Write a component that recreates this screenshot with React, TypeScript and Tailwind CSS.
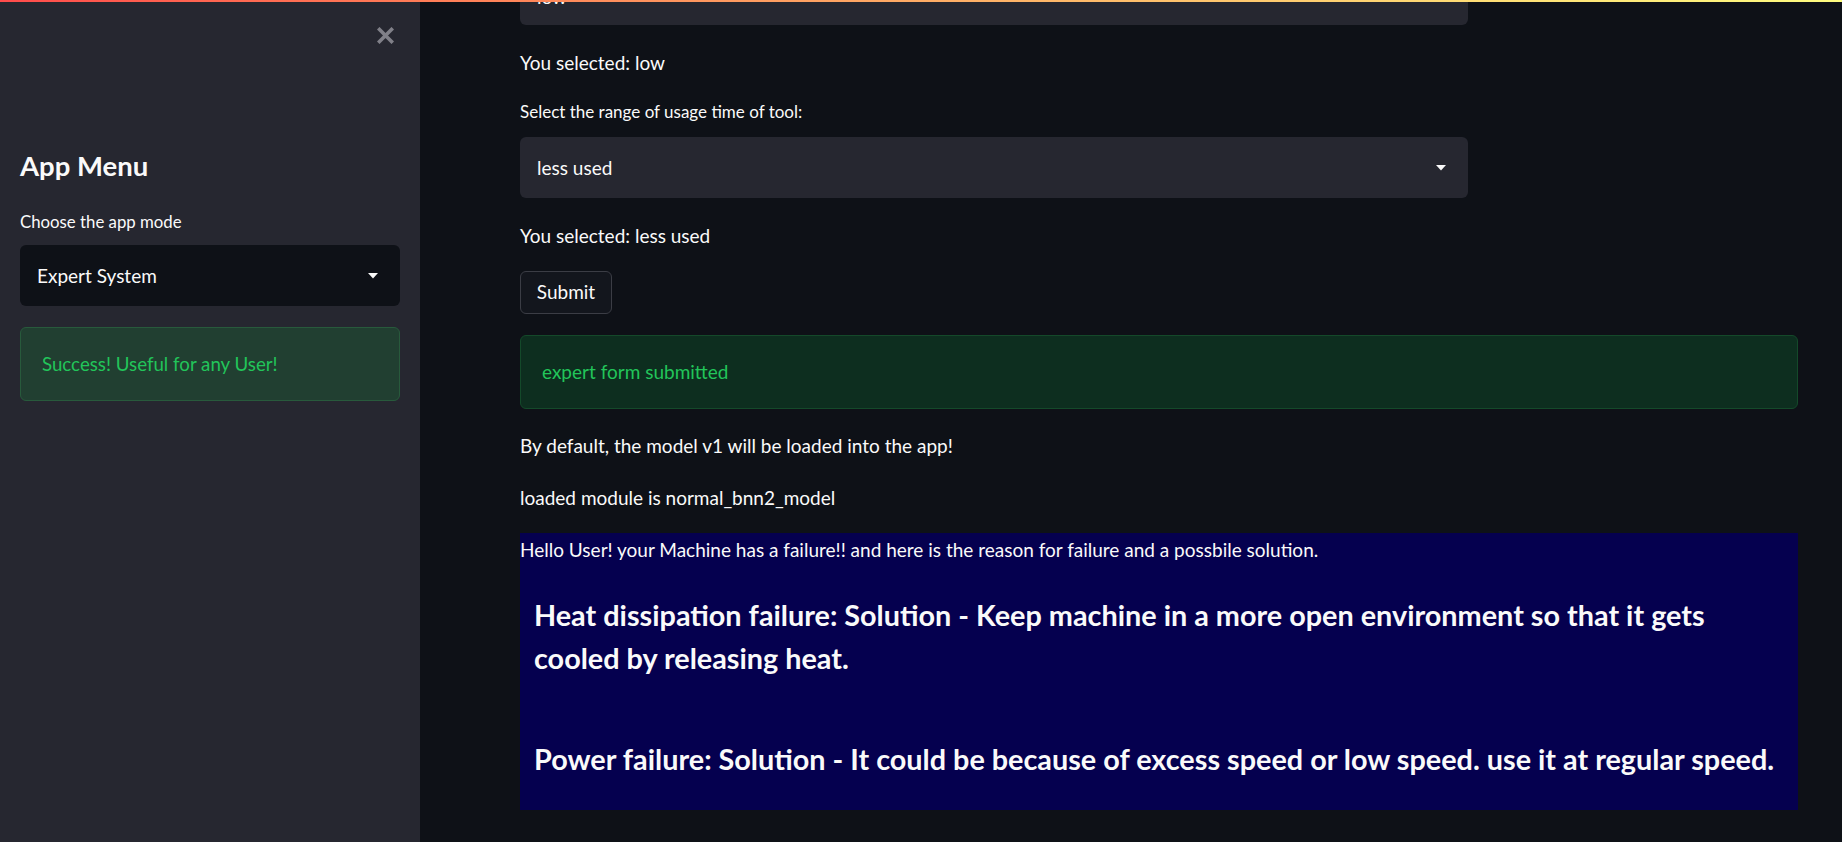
import React from "react";

/* shared bits ─────────────────────────────────────────────────────────────── */

const FONT = "font-['Lato','Noto_Sans',sans-serif]";

function Caret() {
  return (
    <svg width="10" height="6" viewBox="0 0 10 6" className="shrink-0">
      <polygon points="0,0 10,0 5,5.5" fill="#fafafa" />
    </svg>
  );
}

function SelectBox({ value, dark, className = "" }: { value: string; dark?: boolean; className?: string }) {
  return (
    <div
      className={`flex h-[61px] items-center justify-between rounded-[6px] pl-[17px] pr-[22px] text-[19px] text-[#fafafa] ${
        dark ? "bg-[#0e1117]" : "bg-[#262730]"
      } ${className}`}
    >
      <span className="pt-[2px]">{value}</span>
      <Caret />
    </div>
  );
}

function Text({ children, className = "" }: { children: React.ReactNode; className?: string }) {
  return <p className={`text-[19px] leading-[30px] text-[#fafafa] ${className}`}>{children}</p>;
}

/* sidebar ─────────────────────────────────────────────────────────────────── */

function Sidebar() {
  return (
    <aside className="flex h-full w-[420px] shrink-0 flex-col bg-[#262730] px-[20px]">
      <div className="flex justify-end pr-[6px] pt-[27px]">
        <svg width="17" height="17" viewBox="0 0 17 17">
          <path d="M2.5 2.5 L14.5 14.5 M14.5 2.5 L2.5 14.5" stroke="#808088" strokeWidth="3.6" strokeLinecap="square" />
        </svg>
      </div>

      <h2 className="mt-[105px] text-[27.5px] font-bold leading-[34px] text-[#fafafa]">App Menu</h2>
      <label className="mt-[27px] text-[16.8px] leading-[24px] text-[#fafafa]">Choose the app mode</label>
      <SelectBox value="Expert System" dark className="mt-[11px]" />

      <div className="mt-[21px] flex h-[74px] items-center rounded-[6px] border border-[#285a3c] bg-[#213f31] px-[21px] text-[18.7px] text-[#22c55a]">
        Success! Useful for any User!
      </div>
    </aside>
  );
}

/* main column ─────────────────────────────────────────────────────────────── */

function Main() {
  return (
    <main className="h-full flex-1 overflow-hidden bg-[#0e1117] pl-[100px] pr-[44px]">
      <div className="flex flex-col pt-[1px]">
        <SelectBox value="low" className="mt-[-37px] w-[948px] [&>span]:pt-[6px]" />
        <Text className="mt-[23px]">You selected: low</Text>

        <label className="mt-[22px] text-[17px] leading-[24px] text-[#fafafa]">
          Select the range of usage time of tool:
        </label>
        <SelectBox value="less used" className="mt-[13px] w-[948px]" />
        <Text className="mt-[23px]">You selected: less used</Text>

        <div className="mt-[20px]">
          <button
            type="button"
            className="h-[43px] w-[92px] rounded-[6px] border border-[#3b3d45] bg-[#13161d] text-[19px] text-[#fafafa]"
          >
            Submit
          </button>
        </div>

        <div className="mt-[21px] flex h-[74px] items-center rounded-[6px] border border-[#14492a] bg-[#0d2e1f] px-[21px] text-[19px] text-[#22c55a]">
          expert form submitted
        </div>

        <Text className="mt-[22px]">By default, the model v1 will be loaded into the app!</Text>
        <Text className="mt-[22px]">loaded module is normal_bnn2_model</Text>

        <div className="mt-[20px] h-[277px] bg-[#05004f] text-[#fafafa]">
          <p className="pt-[1px] text-[19px] leading-[32px]">
            Hello User! your Machine has a failure!! and here is the reason for failure and a possbile solution.
          </p>
          <h2 className="mt-[28px] whitespace-nowrap pl-[14px] text-[28.8px] font-bold leading-[43px]">
            Heat dissipation failure: Solution - Keep machine in a more open environment so that it gets
            <br />
            cooled by releasing heat.
          </h2>
          <h2 className="mt-[58px] whitespace-nowrap pl-[14px] text-[28.8px] font-bold leading-[43px]">
            Power failure: Solution - It could be because of excess speed or low speed. use it at regular speed.
          </h2>
        </div>
      </div>
    </main>
  );
}

export default function App() {
  return (
    <div className={`relative flex h-[842px] w-full overflow-hidden ${FONT}`}>
      <div className="absolute left-0 right-0 top-0 z-10 h-[2px] bg-linear-to-r from-[#ff4b4b] to-[#fffd80]" />
      <Sidebar />
      <Main />
    </div>
  );
}
